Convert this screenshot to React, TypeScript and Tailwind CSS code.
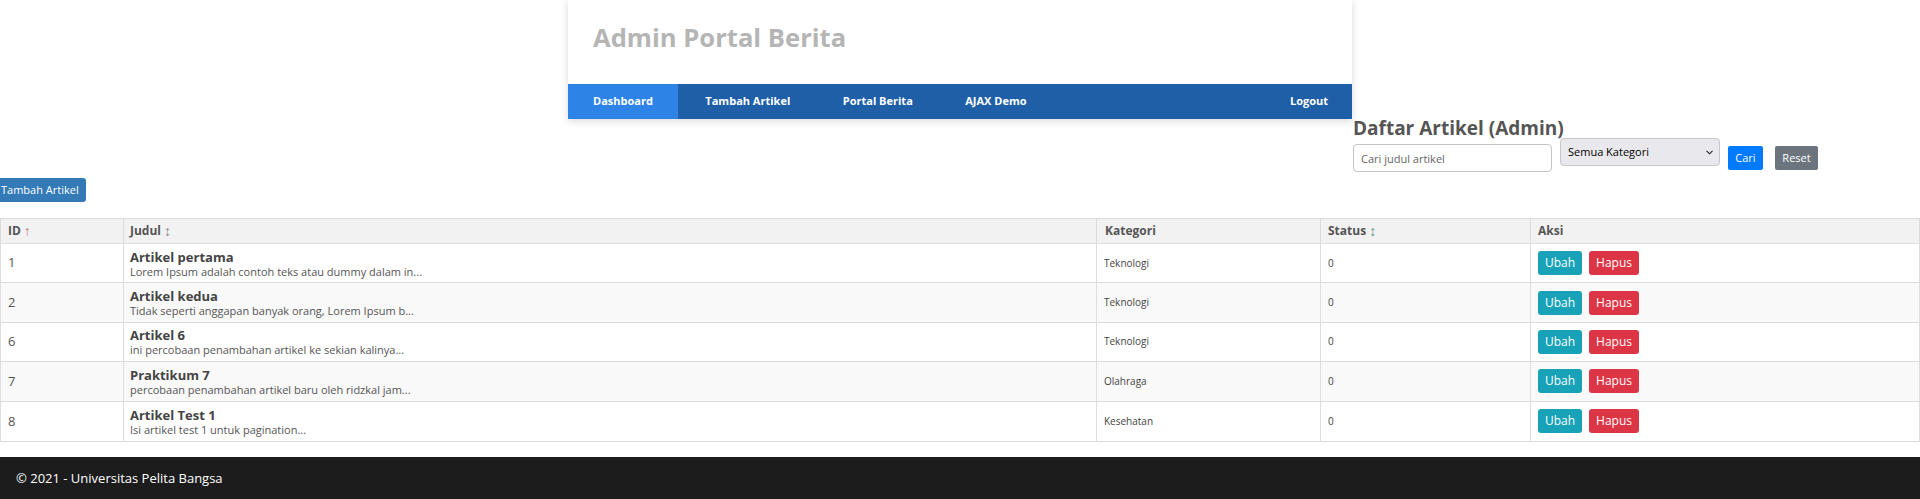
import React from 'react';

const navItems = ['Dashboard', 'Tambah Artikel', 'Portal Berita', 'AJAX Demo'];

const articles = [
  { id: 1, title: 'Artikel pertama', excerpt: 'Lorem Ipsum adalah contoh teks atau dummy dalam in...', category: 'Teknologi', status: 0 },
  { id: 2, title: 'Artikel kedua', excerpt: 'Tidak seperti anggapan banyak orang, Lorem Ipsum b...', category: 'Teknologi', status: 0 },
  { id: 6, title: 'Artikel 6', excerpt: 'ini percobaan penambahan artikel ke sekian kalinya...', category: 'Teknologi', status: 0 },
  { id: 7, title: 'Praktikum 7', excerpt: 'percobaan penambahan artikel baru oleh ridzkal jam...', category: 'Olahraga', status: 0 },
  { id: 8, title: 'Artikel Test 1', excerpt: 'Isi artikel test 1 untuk pagination...', category: 'Kesehatan', status: 0 },
];

const cols = 'grid grid-cols-[123px_973px_224px_210px_1fr]';

export default function App() {
  return (
    <div className="min-h-[499px] bg-white font-['Open_Sans',sans-serif] text-[#555]">
      {/* Header */}
      <header className="mx-auto w-[784px] bg-white shadow-[0_2px_8px_rgba(0,0,0,0.15)]">
        <div className="h-[84px] px-[25px] pt-[25px]">
          <h1 className="text-[25.6px] font-bold leading-none text-[#b5b5b5]">Admin Portal Berita</h1>
        </div>
        <nav className="flex h-[35px] gap-[2.5px] bg-[#1f5fa8] text-[11px] font-bold text-white">
          {navItems.map((item, i) => (
            <a
              key={item}
              href="#"
              className={`flex items-center px-[25px] ${i === 0 ? 'bg-[#2d83e6]' : ''}`}
            >
              {item}
            </a>
          ))}
          <a href="#" className="ml-auto flex items-center pr-[24px]">Logout</a>
        </nav>
      </header>

      {/* Title + search */}
      <div className="ml-[1353px]">
        <h2 className="text-[19px] font-bold leading-[19px] text-[#555]">Daftar Artikel (Admin)</h2>
        <form className="flex items-start text-[11px]">
          <input
            type="text"
            placeholder="Cari judul artikel"
            className="mt-[6px] h-[28px] w-[199px] rounded-[4px] border border-[#c4c4c4] px-[7px] text-[11px] placeholder:text-[#666] focus:outline-none"
          />
          <div className="relative ml-[8px] flex h-[28px] w-[160px] items-center rounded-[4px] border border-[#c8c8c8] bg-[#e9e9ed] pl-[7px] text-black">
            Semua Kategori
            <svg className="absolute right-[6px] top-[11px]" width="7" height="5" viewBox="0 0 7 5">
              <path d="M0.5 0.8 L3.5 3.8 L6.5 0.8" fill="none" stroke="#222" strokeWidth="1.1" />
            </svg>
          </div>
          <button type="button" className="ml-[8px] mt-[8px] h-[24px] w-[35px] rounded-[2px] bg-[#007bff] text-white">Cari</button>
          <button type="button" className="ml-[12px] mt-[8px] h-[24px] w-[43px] rounded-[2px] bg-[#6c757d] text-white">Reset</button>
        </form>
      </div>

      <button type="button" className="mt-[6px] flex h-[24px] w-[86px] items-center rounded-r-[3px] bg-[#337ab7] pl-[1px] text-[11px] text-white">
        Tambah Artikel
      </button>

      {/* Table */}
      <div className="mt-[16px] border border-[#ddd]">
        <div className={`${cols} h-[25px] border-b border-[#ddd] bg-[#f2f2f2] text-[12px] font-bold text-[#555]`}>
          <div className="flex items-center border-r border-[#ddd] pl-[7px]">ID <span className="ml-[3px] text-[14px] font-normal leading-none text-[#c47a7c]">↑</span></div>
          <div className="flex items-center border-r border-[#ddd] pl-[6px]">Judul <span className="ml-[3px] text-[14px] font-normal leading-none text-[#888]">↕</span></div>
          <div className="flex items-center border-r border-[#ddd] pl-[8px]">Kategori</div>
          <div className="flex items-center border-r border-[#ddd] pl-[7px]">Status <span className="ml-[3px] text-[14px] font-normal leading-none text-[#5a968f]">↕</span></div>
          <div className="flex items-center pl-[7px]">Aksi</div>
        </div>
        {articles.map((a, i) => (
          <div key={a.id} className={`${cols} h-[39.4px] border-b border-[#ddd] last:border-b-0 ${i % 2 === 1 ? 'bg-[#f9f9f9]' : 'bg-white'}`}>
            <div className="flex items-center border-r border-[#ddd] pl-[7px] text-[13px]">{a.id}</div>
            <div className="flex flex-col justify-center border-r border-[#ddd] pl-[6px] pt-[1px]">
              <div className="text-[13px] font-bold leading-[15px] text-[#444]">{a.title}</div>
              <div className="text-[11px] leading-[13px] text-[#555]">{a.excerpt}</div>
            </div>
            <div className="flex items-center border-r border-[#ddd] pl-[7px] text-[10px] text-[#444]">{a.category}</div>
            <div className="flex items-center border-r border-[#ddd] pl-[7px] text-[10px] text-[#444]">{a.status}</div>
            <div className="flex items-center gap-[7px] pl-[7px] text-[12px] text-white">
              <button type="button" className="h-[24px] w-[44px] rounded-[3px] bg-[#17a2b8]">Ubah</button>
              <button type="button" className="h-[24px] w-[50px] rounded-[3px] bg-[#dc3545]">Hapus</button>
            </div>
          </div>
        ))}
      </div>

      {/* Footer */}
      <footer className="mt-[15px] flex h-[42px] items-center bg-[#1c1c1c] px-[16px] pt-[2px] text-[13px] text-white">
        © 2021 - Universitas Pelita Bangsa
      </footer>
    </div>
  );
}
